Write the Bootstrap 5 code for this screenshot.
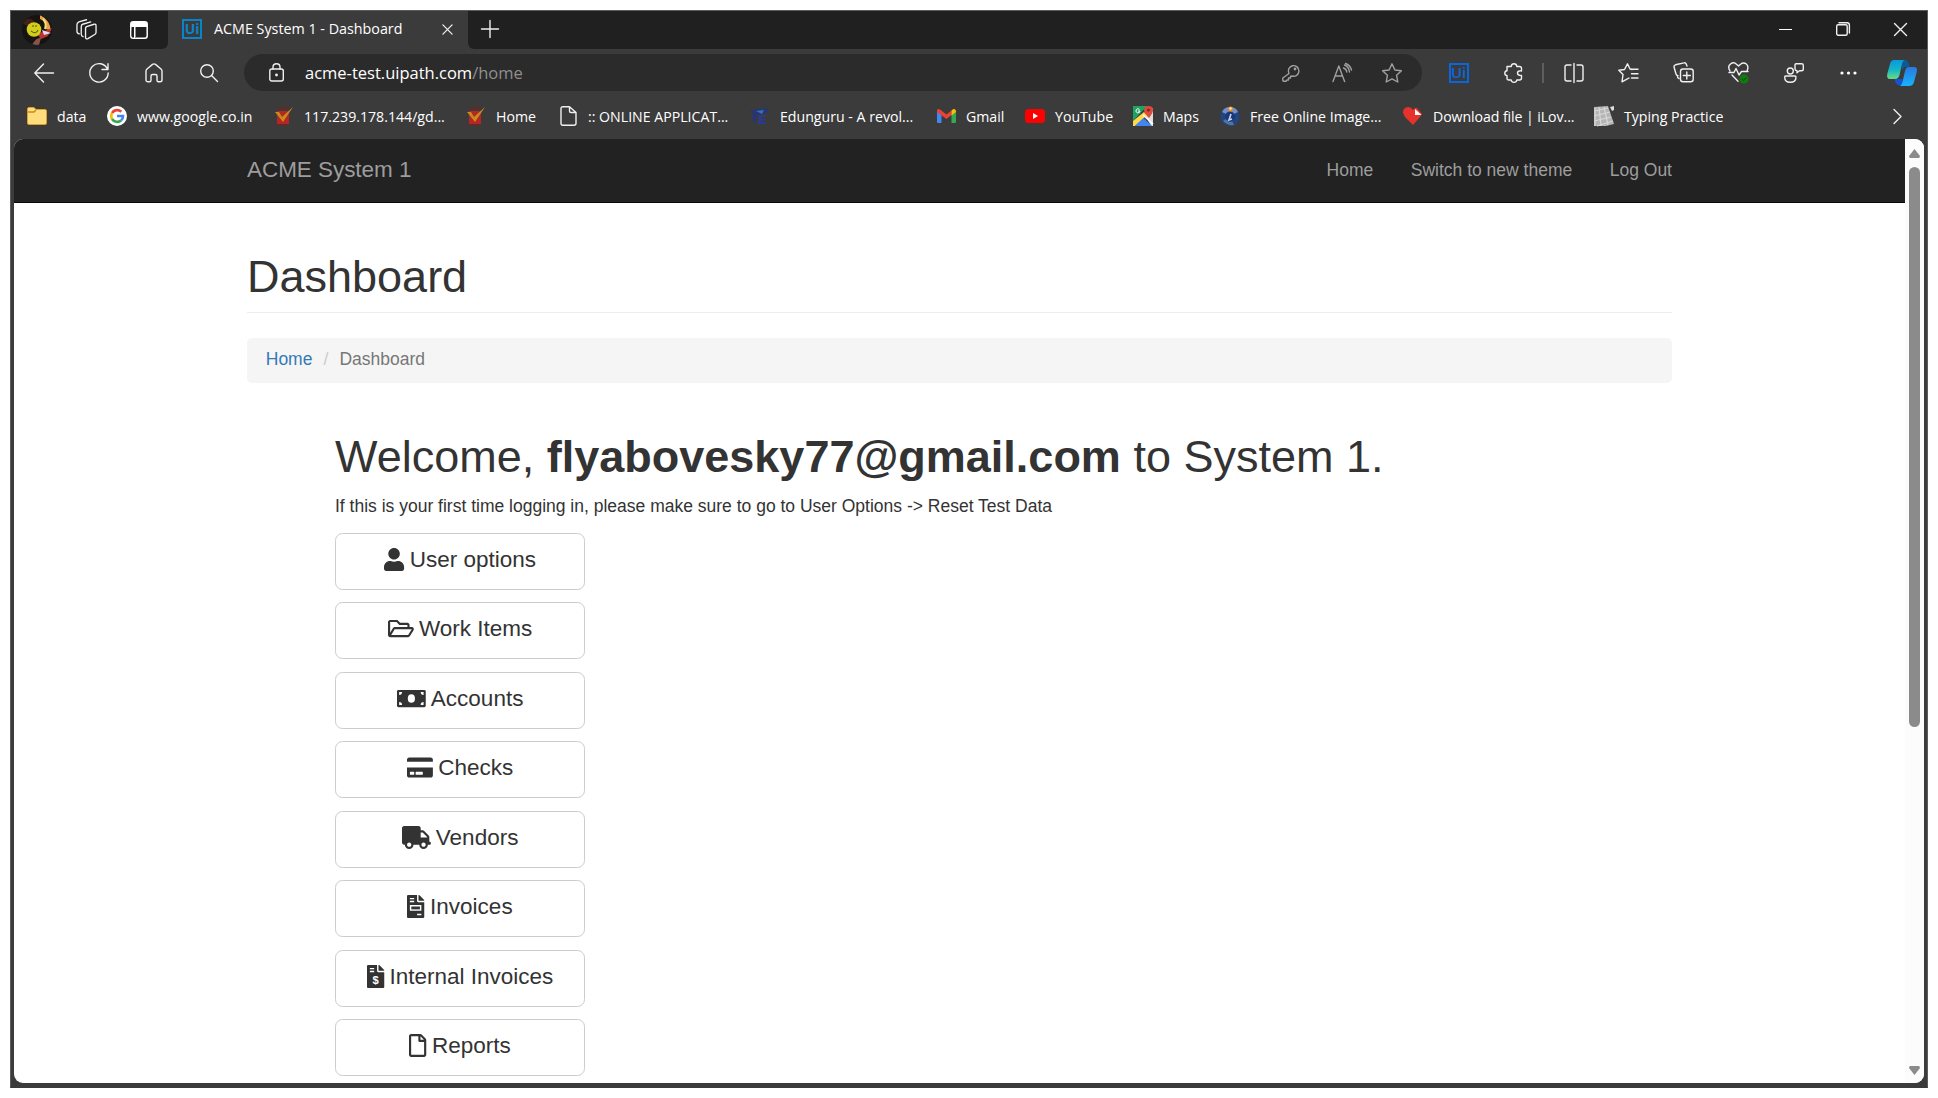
<!DOCTYPE html>
<html lang="en">
<head>
<meta charset="utf-8">
<meta name="viewport" content="width=device-width, initial-scale=1">
<title>ACME System 1 - Dashboard</title>
<link href="https://cdn.jsdelivr.net/npm/bootstrap@5.3.0/dist/css/bootstrap.min.css" rel="stylesheet">
<style>
html,body{height:1098px;overflow:hidden;background:#fff}
body{padding:10px;font-family:"Liberation Sans",Arial,sans-serif}
svg{display:block;flex:none;overflow:visible}
.browser{width:1918px;height:1078px;background:#3b3b3b;border:1px solid #5b5d5d;border-bottom-color:#3b3b3b;font-family:"Open Sans","Noto Sans",sans-serif;color:#fff}
.ln{fill:none;stroke:#f0f0f0;stroke-width:1.4;stroke-linecap:round;stroke-linejoin:round}
.dim{stroke:#a0a0a0}
/* tab strip */
.strip{height:38px;background:#3b3b3b}
.strip-left{width:157px;background:#202020;border-radius:0 0 6px 0}
.strip-right{background:#202020;border-radius:0 0 0 6px}
.strip-right .win-first{margin-left:auto}
.tab-active{width:300px;padding:0 0 2px 14px;font-size:14.3px}
.tab-title{width:221px;margin-left:12px;white-space:nowrap;padding-bottom:1px}
.ui-logo{width:20px;height:20px;border:2.5px solid #0a84c8;color:#0a84c8;font:700 14px/15px "Open Sans",sans-serif;text-align:center;letter-spacing:-.2px;flex:none}
.ui-logo.ui-blue{border-color:#0867df;color:#0867df;font-weight:600;font-size:15px}
.slot{width:55px;height:38px;display:flex;align-items:center;justify-content:center;flex:none}
.slot-win{width:57.5px}
.win-group{margin-right:-2px;padding-bottom:2px}
/* toolbar */
.tools{height:49px;padding:5px 0 7px 5.5px}
.omnibox{width:1178px;height:37px;border-radius:19px;background:#2b2b2b;margin:0 9px 0 7.5px;padding-left:25px;font-size:16.5px}
.omnibox .path-part{color:#8f8f8f}
.url-text{margin-left:21px;white-space:nowrap;padding-top:1px}
.vsep{width:2px;height:20px;background:#5e5e5e;margin:0 2px 0 1px}
/* bookmarks */
.marks{height:41px;padding:0 0 4px 16px;font-size:14.15px}
.mk{flex:none;gap:10px;white-space:nowrap}
/* viewport */
.view{height:944px;margin:0 3px 0 3px;border-radius:9px;background:#fff;overflow:hidden;font-family:"Liberation Sans",Arial,sans-serif;color:#333;font-size:17.5px}
.page-area{width:1891px}
.topnav{height:64px;background:#222;border-bottom:1px solid #080808;padding:0 233px 1px}
.topnav .navbar-brand{font-size:22.5px;line-height:30px;color:#9d9d9d;margin:0;padding:0 0 1px;letter-spacing:-.05px}
.topnav .nav-link{font-size:17.5px;color:#9d9d9d;padding:0 0 0 37.5px}
.inner{width:1425px;margin-left:233px}
.inner h1{font-size:45px;line-height:49.5px;margin:0;color:#333;font-weight:500}
.head-title{padding:49px 0 10px;border-bottom:1px solid #eee}
.crumbs{height:45px;margin:25px 0 0;padding:0 18.75px 1px;background:#f5f5f5;border-radius:5px;font-size:17.5px}
.crumbs .breadcrumb-item+.breadcrumb-item{padding-left:0}
.crumbs .breadcrumb-item+.breadcrumb-item::before{content:"/\00a0";padding:0 6.25px 0 11px;color:#ccc}
.crumbs a{color:#337ab7;text-decoration:none}
.crumbs .active{color:#777}
.welcome{margin-left:88px;padding-top:49.5px}
.welcome p{margin:12.5px 0 14px;line-height:25px}
.opt{width:250px;height:57px;border:1px solid #ccc;border-radius:7.5px;font-size:22.5px;line-height:30px;color:#333;padding:0 0 3px;background:#fff}
.opt svg{height:23px;fill:#333;margin:0 5.5px 1px 0}
.opts{gap:12.43px}
.sbar{width:19px;background:#fcfcfc;padding:10px 4px 8px}
.thumb{width:11px;height:560px;border-radius:6px;background:#8b8b8b;margin-top:9px}
</style>
<script src="https://cdn.jsdelivr.net/npm/bootstrap@5.3.0/dist/js/bootstrap.bundle.min.js"></script>
</head>
<body>
<div class="browser">
  <div class="strip d-flex">
    <div class="strip-left d-flex align-items-center">
      <svg width="30" height="30" viewBox="0 0 30 30" style="margin-left:11px"><defs><clipPath id="av"><circle cx="15" cy="15" r="15"/></clipPath></defs><g clip-path="url(#av)"><rect width="30" height="30" fill="#17130f"/><path d="M0 8Q7 0 13 7L7 12Z" fill="#452018"/><path d="M18 0Q28 5 29 16L24 14Q25 6 18 4Z" fill="#e6a545"/><path d="M21 4Q25 8 23 14" stroke="#f6dc80" stroke-width="2" fill="none"/><path d="M15 19L30 13L26 21L19 24Z" fill="#b83434"/><path d="M20 15L29 18L22 20Z" fill="#e4d8ef"/><path d="M10 30Q14 22 19 23L17 30Z" fill="#87534b"/><circle cx="12" cy="14.5" r="7.3" fill="#d3ce1d"/><path d="M9 16Q14 20 16 15" stroke="#544b08" fill="none"/><circle cx="11" cy="11" r=".8" fill="#493f00"/><circle cx="14" cy="11" r=".8" fill="#493f00"/></g></svg>
      <svg class="ln" width="21" height="21" viewBox="0 0 22 22" style="margin:0 0 1px 24px"><path d="M11 8L19 5.5Q21 5 21 7V14Q21 15.4 20 16L12.5 20.5Q10 21.500 10 19V10Q10 8.600 11 8ZM7.500 18.500Q5.500 18 5.500 16V8Q5.500 6 7 5.500L15.500 3M3.500 15.500Q1 15 1 13V6Q1 4 3 3L11 .8"/></svg>
      <svg width="18" height="18" viewBox="0 0 18 18" style="margin:0 0 1px 33px"><rect x=".8" y=".8" width="16.400" height="16.400" rx="2.500" fill="none" stroke="#fff" stroke-width="1.500"/><path d="M1 5V3Q1 1 3 1H15Q17 1 17 3V6H5V17H3Z" fill="#fff"/><path d="M5 6V16" stroke="#fff"/><path d="M1.600 6H4V16.400H3Q1.600 16.400 1.600 15Z" fill="#202020"/></svg>
    </div>
    <div class="tab-active d-flex align-items-center">
      <div class="ui-logo">Ui</div><div class="tab-title">ACME System 1 - Dashboard</div>
      <svg class="ln" width="11" height="11" viewBox="0 0 12 12" style="margin-left:7px"><path d="M1 1L11 11M11 1L1 11"/></svg>
    </div>
    <div class="strip-right d-flex flex-fill align-items-center">
      <svg class="ln" width="18" height="18" viewBox="0 0 18 18" style="margin:0 0 3px 13px"><path d="M9 .5V17.500M.5 9H17.500"/></svg>
      <div class="win-group d-flex ms-auto">
      <div class="slot slot-win"><svg width="13" height="13"><path d="M0 6.500H13" stroke="#fff"/></svg></div>
      <div class="slot slot-win"><svg class="ln" width="14" height="14" viewBox="0 0 14 14"><rect x=".7" y="2.700" width="10.500" height="10.500" rx="1.500"/><path d="M3 .7H11Q13.400 .7 13.400 3V11"/></svg></div>
      <div class="slot slot-win"><svg class="ln" width="13" height="13" viewBox="0 0 13 13"><path d="M.5 .5L12.500 12.500M12.500 .5L.5 12.500"/></svg></div>
      </div>
    </div>
  </div>

  <div class="tools d-flex align-items-center">
    <div class="slot"><svg class="ln" width="20" height="20" viewBox="0 0 20 20"><path d="M19.500 10H.8M9.500 1L.8 10L9.500 19"/></svg></div>
    <div class="slot"><svg class="ln" width="20" height="20" viewBox="0 0 20 20"><path d="M18.500 6.300A9.200 9.200 0 1 0 19.200 10M19 .8V6.500H13"/></svg></div>
    <div class="slot"><svg class="ln" width="18" height="20" viewBox="0 0 18 20"><path d="M1 8Q1 7 2 6L7.500 1.400Q9 .3 10.500 1.400L16 6Q17 7 17 8V17Q17 18.800 15 18.800H13.500Q12 18.800 12 17.300V13Q12 11.500 10.500 11.500H7.500Q6 11.500 6 13V17.300Q6 18.800 4.500 18.800H3Q1 18.800 1 17Z"/></svg></div>
    <div class="slot"><svg class="ln" width="18" height="18" viewBox="0 0 18 18"><circle cx="7" cy="7" r="6.300"/><path d="M11.800 11.800L17.500 17.500"/></svg></div>
    <div class="omnibox d-flex align-items-center">
      <svg class="ln" width="15" height="19" viewBox="0 0 15 19"><rect x=".8" y="6" width="13.500" height="12" rx="2"/><path d="M4 6V4Q4 .8 7.500 .8T11 4V6"/><circle cx="7.500" cy="12" r=".7" fill="#fff"/></svg>
      <div class="url-text me-auto">acme-test.uipath.com<span class="path-part">/home</span></div>
      <svg class="ln dim" width="18" height="18" viewBox="0 0 18 18" style="margin-right:32px"><path d="M7 9.500A5.300 5.300 0 1 1 10 12L8.500 12.500V14H6.500V16H5L4 17.300H1.500L.8 16.500V14Z"/><circle cx="13" cy="5" r=".7"/></svg>
      <svg class="ln dim" width="20" height="20" viewBox="0 0 20 20" style="margin-right:30px"><path d="M1 18.500L6.800 3L12.600 18.500M3 13H10.600M11.500 5Q14.500 6 14.800 9M12.500 2Q17 4 17.500 9M13.500 .5Q18 2 19.500 7"/></svg>
      <svg class="ln dim" width="20" height="20" viewBox="0 0 20 20" style="margin-right:20px"><path d="M10 .8L12.900 7L19.400 7.800L14.600 12.300L15.800 19L10 15.800L4.200 19L5.400 12.300L.6 7.800L7.100 7Z"/></svg>
    </div>
    <div class="slot"><div class="ui-logo ui-blue">Ui</div></div>
    <div class="slot"><svg class="ln" width="20" height="20" viewBox="0 0 20 20"><path d="M3 3.500H7.200Q7.500 .8 10 .8T12.800 3.500H15.500Q17.500 3.500 17.500 5.500V8Q13.500 7.500 13.500 10T17.500 12.500V15Q17.500 17 15.500 17H12.800Q12.500 19.400 10 19.400T7.200 17H5Q3 17 3 15V12.500Q.8 12.500 .8 10.200T3 7.700Z"/></svg></div>
    <div class="vsep"></div>
    <div class="slot"><svg class="ln" width="20" height="20" viewBox="0 0 20 20"><path d="M10 .5V19.500M7 2H3Q1 2 1 4V16Q1 18 3 18H7M13 2H17Q19 2 19 4V16Q19 18 17 18H13"/></svg></div>
    <div class="slot"><svg class="ln" width="21" height="20" viewBox="0 0 21 20"><path d="M14 6.500L12 6L9.500 .8L6.500 6.500L.8 7.200L5 11.500L4 18.800L8 16.700L11 15M13.500 6.200H20M13.500 10.700H20M13.500 15H20"/></svg></div>
    <div class="slot"><svg class="ln" width="21" height="21" viewBox="0 0 21 21"><rect x="7.500" y="7" width="12.700" height="12.800" rx="2.500"/><path d="M13.800 10V17M10.300 13.500H17.300M14 4L13.200 2Q12.600 .5 11 .9L2.500 2.800Q.7 3.300 1 5L3 12Q3.400 13.500 5 13.700M4.500 15Q5 16.300 6 16.500"/></svg></div>
    <div class="slot"><svg class="ln" width="21" height="21" viewBox="0 0 21 21"><path d="M2 9Q-.8 4.500 2.500 2T8.500 2.200L10.500 4L12.500 2.200Q15.500 -.2 18.300 2T19 9M1 10.500H6L8 6.500L11 13L13.500 9.500H20M4 13L10 19.300"/><circle cx="16" cy="17" r="4.500" fill="#107c10" stroke="none"/><path d="M14 17L15.500 18.500L18 15.800" stroke="#06440a" stroke-width="1"/></svg></div>
    <div class="slot"><svg class="ln" width="20" height="20" viewBox="0 0 20 20"><circle cx="6.300" cy="8" r="3"/><path d="M1.500 13H11Q12 13 12 14Q12 19.300 6.300 19.300T.7 14Q.7 13 1.500 13ZM12 .8H17.500Q19.300 .8 19.300 2.500V6Q19.300 7.800 17.500 7.800H15.500L13 9.800V7.700Q11 7.500 11 6V2.500Q11 .8 12 .8Z"/></svg></div>
    <div class="slot"><svg width="17" height="4" fill="#fff"><circle cx="2" cy="2" r="1.600"/><circle cx="8.500" cy="2" r="1.600"/><circle cx="15" cy="2" r="1.600"/></svg></div>
    <div class="slot" style="width:51px"><svg width="30" height="26" viewBox="0 0 30 26"><defs><linearGradient id="c1" x1="0" y1="0" x2="0" y2="1"><stop offset="0" stop-color="#0999dc"/><stop offset=".5" stop-color="#14b5c8"/><stop offset="1" stop-color="#69dc82"/></linearGradient><linearGradient id="c2" x1="0" y1="0" x2="0" y2="1"><stop offset="0" stop-color="#2b78e0"/><stop offset="1" stop-color="#16b5fb"/></linearGradient></defs><path d="M15 0H18Q21 0 22 4L22.500 7H18L15 10Z" fill="#0c5a90"/><path d="M8 19H15L17 25H12Q9 25 8 21Z" fill="#1951d6"/><path d="M7 0H18Q16 0 15 4L12.500 15Q11.500 19 8 19H3Q-1 19 .5 13L3 4Q4 0 7 0Z" fill="url(#c1)"/><path d="M22 7H27Q31 7 29.700 12L27 22Q26 26 22 26H12Q14.500 26 15.500 22L18 11Q19 7 22 7Z" fill="url(#c2)"/></svg></div>
  </div>

  <div class="marks d-flex align-items-center">
    <div class="mk d-flex align-items-center" style="width:80px"><svg width="20" height="18" viewBox="0 0 20 18"><path d="M.5 2Q.5 .5 2 .5H7L9 2.500H18Q19.500 2.500 19.500 4V16Q19.500 17.500 18 17.500H2Q.5 17.500 .5 16Z" fill="#ffdc7c" stroke="#d8a02c"/><path d="M1 5H7L9 3" fill="none" stroke="#c88f18" stroke-width="1.500"/></svg>data</div>
    <div class="mk d-flex align-items-center" style="width:167px"><svg width="20" height="20" viewBox="0 0 20 20"><circle cx="10" cy="10" r="10" fill="#fff"/><g fill="none" stroke-width="2.600"><path d="M5 7A6 6 0 0 1 14.300 5.800" stroke="#ea4335"/><path d="M5 7.200A6 6 0 0 0 5 13" stroke="#fbbc05"/><path d="M5 13A6 6 0 0 0 14.200 14.300" stroke="#34a853"/><path d="M10 10H16Q16 12.800 14.200 14.300" stroke="#4285f4"/></g></svg>www.google.co.in</div>
    <div class="mk d-flex align-items-center" style="width:192px"><svg width="20" height="20" viewBox="0 0 20 20"><path d="M3 5H15V18H3Z" fill="#b22724"/><path d="M4 2H14M3 19H14" stroke="#702522" stroke-width="1.500"/><path d="M1 6L5 6L8 11L19 1L9 16Z" fill="#c98a1c"/></svg>117.239.178.144/gd...</div>
    <div class="mk d-flex align-items-center" style="width:93px"><svg width="20" height="20" viewBox="0 0 20 20"><path d="M3 5H15V18H3Z" fill="#b22724"/><path d="M4 2H14M3 19H14" stroke="#702522" stroke-width="1.500"/><path d="M1 6L5 6L8 11L19 1L9 16Z" fill="#c98a1c"/></svg>Home</div>
    <div class="mk d-flex align-items-center" style="width:191px"><svg class="ln" width="19" height="20" viewBox="0 0 19 20"><path d="M10.500 .8H4Q2 .8 2 2.800V17.200Q2 19.200 4 19.200H15Q17 19.200 17 17.200V6.500ZM10.500 .8V5Q10.500 6.500 12 6.500H17"/></svg><span>:: ONLINE APPLICAT...</span></div>
    <div class="mk d-flex align-items-center" style="width:187px"><svg width="20" height="18" viewBox="0 0 20 18"><path d="M0 4L8 2L19 1L16 6L8 7L5 16L3 15V6Z" fill="#26347a"/><path d="M6 4L14 3L12 7Z" fill="#3672b9"/><path d="M9 8H16V10H11V11.500H15V13.500H11V15H16V17H8Z" fill="#2c3990"/></svg>Edunguru - A revol...</div>
    <div class="mk d-flex align-items-center" style="width:88px"><svg width="19" height="14" viewBox="0 0 19 14"><path d="M0 2L4.500 5V14H1Q0 14 0 13Z" fill="#4285f4"/><path d="M14.500 5L19 2V13Q19 14 18 14H14.500Z" fill="#34a853"/><path d="M0 2Q0-1 3 .5L9.500 5.500L14.500 1.500V6L9.500 10L0 3Z" fill="#ea4335"/><path d="M14.500 1.500Q18-1.500 19 2V3L14.500 6.500Z" fill="#fbbc04"/></svg>Gmail</div>
    <div class="mk d-flex align-items-center" style="width:108px"><svg width="20" height="14" viewBox="0 0 20 14"><rect width="20" height="14" rx="3.500" fill="#f00"/><path d="M8 4V10L13 7Z" fill="#fff"/></svg>YouTube</div>
    <div class="mk d-flex align-items-center" style="width:87px"><svg width="20" height="20" viewBox="0 0 20 20"><path d="M0 0H14L0 15Z" fill="#1ea362"/><path d="M12 9L20 2V20H18Z" fill="#dedede"/><path d="M0 15L11 6L14 9L2 20H0Z" fill="#fed84d"/><path d="M2 20L10.500 12L19 20Z" fill="#4285f4"/><path d="M10 9L20 18" stroke="#fff" stroke-width="1.500"/><path d="M11 4Q11 0 15.500 0T20 4Q20 7 16 12Q11 7 11 4Z" fill="#dd4b3e"/><circle cx="15.500" cy="4" r="1.600" fill="#7d2720"/><path d="M6.500 3.500A2 2 0 1 0 7 5H5" stroke="#fff" fill="none"/></svg>Maps</div>
    <div class="mk d-flex align-items-center" style="width:183px"><svg width="20" height="20" viewBox="0 0 20 20"><circle cx="10" cy="10.500" r="9.500" fill="#214484"/><path d="M2 6Q4 1 10 1T18 6L14 8Q10 4 6 8Z" fill="#6f91c8"/><path d="M3 15Q8 20 14 19L12 15Q9 18 7 12Z" fill="#5373a5"/><circle cx="10" cy="10.500" r="5" fill="#1c3975"/><path d="M11 8L9 14L12 13" stroke="#c5d5f0" stroke-width="1.600" fill="none"/><circle cx="10.500" cy="3" r="2.500" fill="#ed8a28"/><circle cx="10.500" cy="2.500" r="1.200" fill="#ffe8b0"/></svg>Free Online Image...</div>
    <div class="mk d-flex align-items-center" style="width:191px;letter-spacing:-.08px"><svg width="20" height="18" viewBox="0 0 20 18"><path d="M10 18L2 10Q-2 4 2 1Q7-2 10 3Q12 0 14 1L19 7L17 10Z" fill="#e5322d"/><path d="M12 2V8H18.500Z" fill="#fff"/></svg>Download file | iLov...</div>
    <div class="mk d-flex align-items-center"><svg width="20" height="20" viewBox="0 0 20 20"><path d="M0 1L14 0L20 18L12 20H0Z" fill="#b5b5b5"/><path d="M1 5L14 2M0 10L16 6M0 15L17 11M3 20L19 15M5 1L7 20M10 1L14 19M1 2V20" stroke="#d8d8d8" stroke-width="1.200"/><path d="M16 1L20 0V4L18 5Z" fill="#ddd"/></svg>Typing Practice</div>
    <svg class="ln ms-auto" width="9" height="15" viewBox="0 0 9 15" style="margin-right:25px"><path d="M1 .5L8 7.500L1 14.500"/></svg>
  </div>

  <div class="view d-flex">
    <div class="page-area">
      <nav class="topnav navbar d-flex justify-content-between align-items-center">
        <a class="navbar-brand" href="#">ACME System 1</a>
        <div class="d-flex"><a class="nav-link" href="#">Home</a><a class="nav-link" href="#">Switch to new theme</a><a class="nav-link" href="#">Log Out</a></div>
      </nav>
      <div class="inner">
        <div class="head-title"><h1>Dashboard</h1></div>
        <ol class="crumbs breadcrumb align-items-center"><li class="breadcrumb-item"><a href="#">Home</a></li><li class="breadcrumb-item active">Dashboard</li></ol>
        <div class="welcome">
          <h1>Welcome, <b>flyabovesky77@gmail.com</b> to System 1.</h1>
          <p>If this is your first time logging in, please make sure to go to User Options -&gt; Reset Test Data</p>
          <div class="opts d-flex flex-column">
            <button class="btn opt d-flex align-items-center justify-content-center"><svg viewBox="0 0 448 512"><path d="M224 256c70.700 0 128-57.300 128-128S294.700 0 224 0 96 57.300 96 128s57.300 128 128 128zm89.600 32h-16.700c-22.200 10.200-46.900 16-72.900 16s-50.600-5.800-72.900-16h-16.700C60.200 288 0 348.200 0 422.400V464c0 26.500 21.500 48 48 48h352c26.500 0 48-21.500 48-48v-41.600c0-74.200-60.200-134.400-134.400-134.400z"/></svg>User options</button>
            <button class="btn opt d-flex align-items-center justify-content-center"><svg viewBox="0 0 576 512"><path fill-rule="evenodd" d="M527.900 224H480v-48c0-26.500-21.500-48-48-48H272l-64-64H48C21.500 64 0 85.500 0 112v288c0 26.500 21.500 48 48 48h400c16.500 0 31.900-8.500 40.700-22.600l79.900-128c20-31.900-3-73.400-40.700-73.400zM48 118c0-3.300 2.700-6 6-6h134.100l64 64H426c3.300 0 6 2.700 6 6v42H152c-16.800 0-32.400 8.800-41.100 23.200L48 351.400zm400 282H72l77.200-128H528z"/></svg>Work Items</button>
            <button class="btn opt d-flex align-items-center justify-content-center"><svg viewBox="0 0 640 512"><path fill-rule="evenodd" d="M32 64H608Q640 64 640 96V416Q640 448 608 448H32Q0 448 0 416V96Q0 64 32 64ZM320 160A80 96 0 1 0 320 352A80 96 0 1 0 320 160ZM48 112V176A64 64 0 0 0 112 112ZM528 112A64 64 0 0 0 592 176V112ZM48 336V400H112A64 64 0 0 0 48 336ZM592 336A64 64 0 0 0 528 400H592Z"/></svg>Accounts</button>
            <button class="btn opt d-flex align-items-center justify-content-center"><svg viewBox="0 0 576 512"><path fill-rule="evenodd" d="M0 432c0 26.500 21.500 48 48 48h480c26.500 0 48-21.500 48-48V256H0v176zm192-68c0-6.600 5.400-12 12-12h136c6.600 0 12 5.400 12 12v40c0 6.600-5.400 12-12 12H204c-6.600 0-12-5.400-12-12v-40zm-128 0c0-6.600 5.400-12 12-12h72c6.600 0 12 5.400 12 12v40c0 6.600-5.400 12-12 12H76c-6.600 0-12-5.400-12-12v-40zM576 80v48H0V80c0-26.500 21.500-48 48-48h480c26.500 0 48 21.500 48 48z"/></svg>Checks</button>
            <button class="btn opt d-flex align-items-center justify-content-center"><svg viewBox="0 0 640 512"><path fill-rule="evenodd" d="M624 352h-16V243.900c0-12.700-5.100-24.900-14.100-33.900L494 110.100c-9-9-21.200-14.100-33.900-14.100H416V48c0-26.500-21.500-48-48-48H48C21.500 0 0 21.500 0 48v320c0 26.500 21.500 48 48 48h16c0 53 43 96 96 96s96-43 96-96h128c0 53 43 96 96 96s96-43 96-96h48c8.800 0 16-7.200 16-16v-32c0-8.800-7.200-16-16-16zM160 464c-26.500 0-48-21.500-48-48s21.500-48 48-48 48 21.500 48 48-21.500 48-48 48zm320 0c-26.500 0-48-21.500-48-48s21.500-48 48-48 48 21.500 48 48-21.500 48-48 48zm80-208H416V144h44.100l99.900 99.900V256z"/></svg>Vendors</button>
            <button class="btn opt d-flex align-items-center justify-content-center"><svg viewBox="0 0 384 512"><path fill-rule="evenodd" d="M256 0H262Q273 0 279 7L377 105Q384 112 384 122V128H256ZM224 0V136Q224 160 248 160H384V488Q384 512 360 512H24Q0 512 0 488V24Q0 0 24 0ZM64 64V96H160V64ZM64 128V160H160V128ZM64 224V352H320V224ZM224 416V448H320V416Z"/><path d="M96 256H288V320H96Z"/></svg>Invoices</button>
            <button class="btn opt d-flex align-items-center justify-content-center"><svg viewBox="0 0 384 512"><path fill-rule="evenodd" d="M256 0H262Q273 0 279 7L377 105Q384 112 384 122V128H256ZM224 0V136Q224 160 248 160H384V488Q384 512 360 512H24Q0 512 0 488V24Q0 0 24 0ZM64 64V96H160V64ZM64 128V160H160V128Z"/><text x="192" y="430" text-anchor="middle" font-family="Liberation Sans" font-weight="700" font-size="250" fill="#fff">$</text></svg>Internal Invoices</button>
            <button class="btn opt d-flex align-items-center justify-content-center"><svg viewBox="0 0 384 512"><path fill-rule="evenodd" d="M369.900 97.900L286 14C277 5 264.800 0 252.100 0H48C21.500 0 0 21.500 0 48v416c0 26.500 21.500 48 48 48h288c26.500 0 48-21.500 48-48V131.900c0-12.700-5.100-25-14.100-34zM332.100 128H256V51.900l76.100 76.100zM48 464V48h160v104c0 13.300 10.700 24 24 24h104v288H48z"/></svg>Reports</button>
          </div>
        </div>
      </div>
    </div>
    <div class="sbar d-flex flex-column">
      <svg width="11" height="9"><path d="M5.500 0L11 7Q11 9 9.500 9H1.500Q0 9 0 7Z" fill="#8b8b8b"/></svg>
      <div class="thumb"></div>
      <svg class="mt-auto" width="11" height="9"><path d="M5.500 9L11 2Q11 0 9.500 0H1.500Q0 0 0 2Z" fill="#8b8b8b"/></svg>
    </div>
  </div>
</div>
</body>
</html>
